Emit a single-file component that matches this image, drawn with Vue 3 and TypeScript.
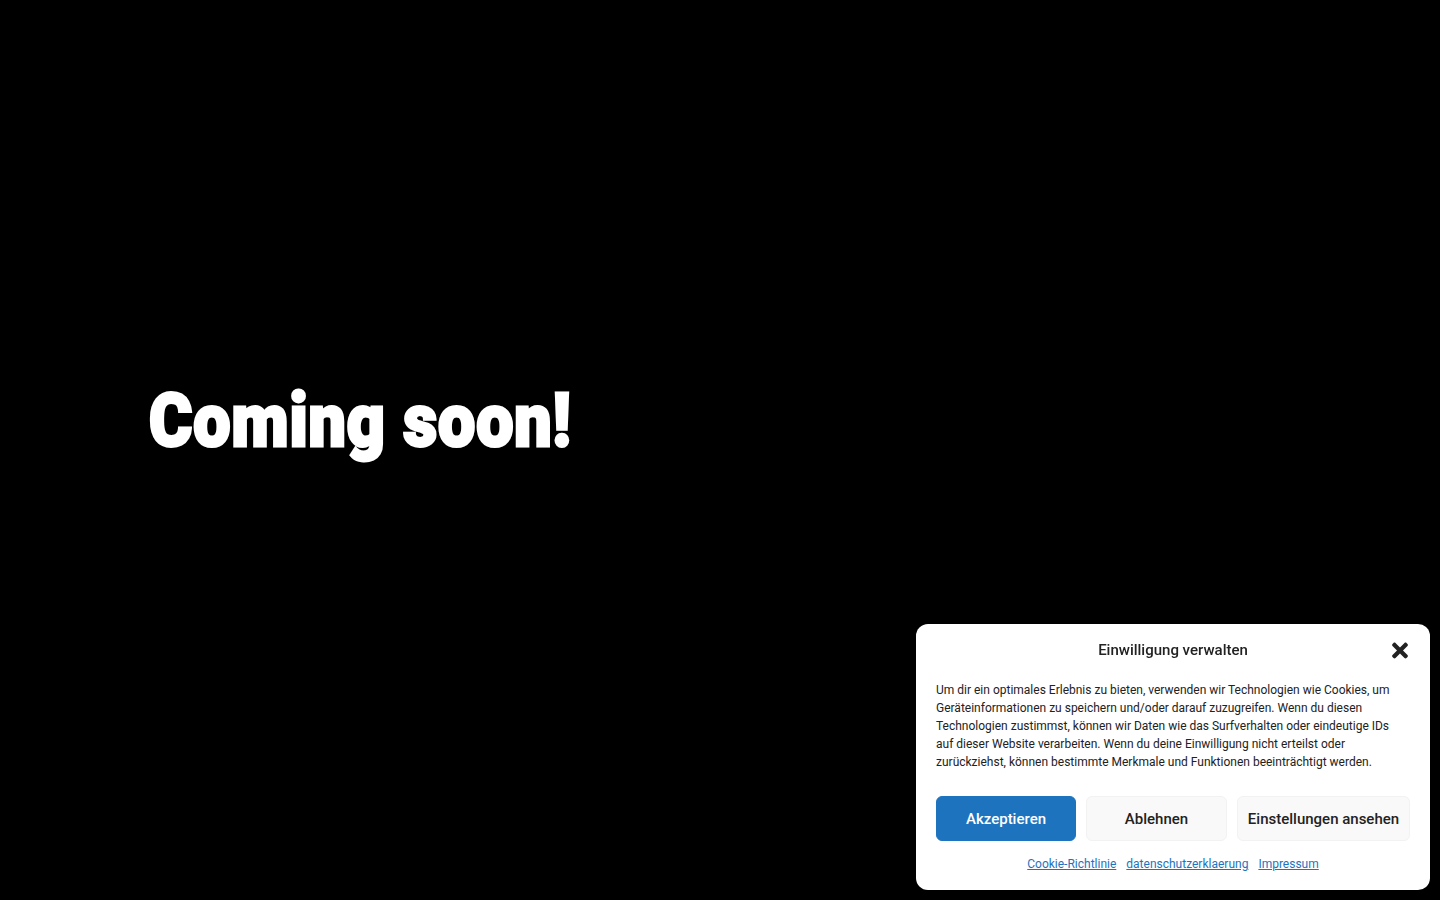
<script setup lang="ts">
const links = ["Cookie-Richtlinie", "datenschutzerklaerung", "Impressum"];
</script>

<template>
  <main class="page">
    <h1 class="headline">Coming soon!</h1>
  </main>

  <aside class="consent">
    <header class="consent-head">
      <h2>Einwilligung verwalten</h2>
      <button class="close" aria-label="Schließen">
        <svg viewBox="0 0 352 512" width="16" height="23" fill="#222">
          <path d="M242.72 256l100.07-100.07c12.28-12.28 12.28-32.19 0-44.48l-22.24-22.24c-12.28-12.28-32.19-12.28-44.48 0L176 189.28 75.93 89.21c-12.28-12.28-32.19-12.28-44.48 0L9.21 111.45c-12.28 12.28-12.28 32.19 0 44.48L109.28 256 9.21 356.07c-12.28 12.28-12.28 32.19 0 44.48l22.24 22.24c12.28 12.28 32.2 12.28 44.48 0L176 322.72l100.07 100.07c12.28 12.28 32.2 12.28 44.48 0l22.24-22.24c12.28-12.28 12.28-32.19 0-44.48L242.72 256z" />
        </svg>
      </button>
    </header>
    <p class="message">
      Um dir ein optimales Erlebnis zu bieten, verwenden wir Technologien wie Cookies, um<br />
      Geräteinformationen zu speichern und/oder darauf zuzugreifen. Wenn du diesen<br />
      Technologien zustimmst, können wir Daten wie das Surfverhalten oder eindeutige IDs<br />
      auf dieser Website verarbeiten. Wenn du deine Einwilligung nicht erteilst oder<br />
      zurückziehst, können bestimmte Merkmale und Funktionen beeinträchtigt werden.
    </p>
    <div class="actions">
      <button class="btn accept">Akzeptieren</button>
      <button class="btn deny">Ablehnen</button>
      <button class="btn settings">Einstellungen ansehen</button>
    </div>
    <nav class="links">
      <a v-for="link in links" :key="link" href="#">{{ link }}</a>
    </nav>
  </aside>
</template>

<style>
html,
body {
  background: #000;
}
</style>

<style scoped>
.page {
  height: 900px;
  box-sizing: border-box;
  padding-left: 149px;
  display: flex;
  align-items: center;
  background: #000;
}

.headline {
  margin: -58px 0 0;
  color: #fff;
  font-family: Roboto, sans-serif;
  font-size: 74px;
  line-height: 1;
  font-weight: 900;
  letter-spacing: 1px;
  -webkit-text-stroke: 3px #fff;
  white-space: nowrap;
  transform: scaleX(0.895);
  transform-origin: left center;
}

.consent {
  position: fixed;
  right: 10px;
  bottom: 10px;
  width: 514px;
  height: 266px;
  box-sizing: border-box;
  padding: 0 20px;
  background: #fff;
  border-radius: 12px;
  font-family: Roboto, sans-serif;
  color: #222;
}

.consent-head {
  position: relative;
  height: 52px;
  display: flex;
  align-items: center;
  justify-content: center;
}

.consent-head h2 {
  margin: 0;
  font-size: 15px;
  font-weight: 500;
  color: #222;
}

.close {
  position: absolute;
  right: 2px;
  top: 15px;
  padding: 0;
  border: 0;
  background: none;
  display: flex;
}

.message {
  margin: 5px 0 0;
  font-size: 12px;
  line-height: 18px;
  white-space: nowrap;
}

.actions {
  margin-top: 25px;
  display: flex;
  gap: 10px;
}

.btn {
  height: 45px;
  box-sizing: border-box;
  border-radius: 6px;
  font-family: inherit;
  font-size: 15px;
  font-weight: 500;
  padding: 0;
  border: 1px solid #f2f2f2;
  background: #f9f9f9;
  color: #222;
}

.accept {
  width: 140px;
  background: #1e73be;
  border-color: #1e73be;
  color: #fff;
}

.deny {
  width: 141px;
}

.settings {
  width: 173px;
}

.links {
  margin-top: 15px;
  display: flex;
  justify-content: center;
  gap: 10px;
  font-size: 12px;
  line-height: 16px;
}

.links a {
  color: #1e73be;
}
</style>
